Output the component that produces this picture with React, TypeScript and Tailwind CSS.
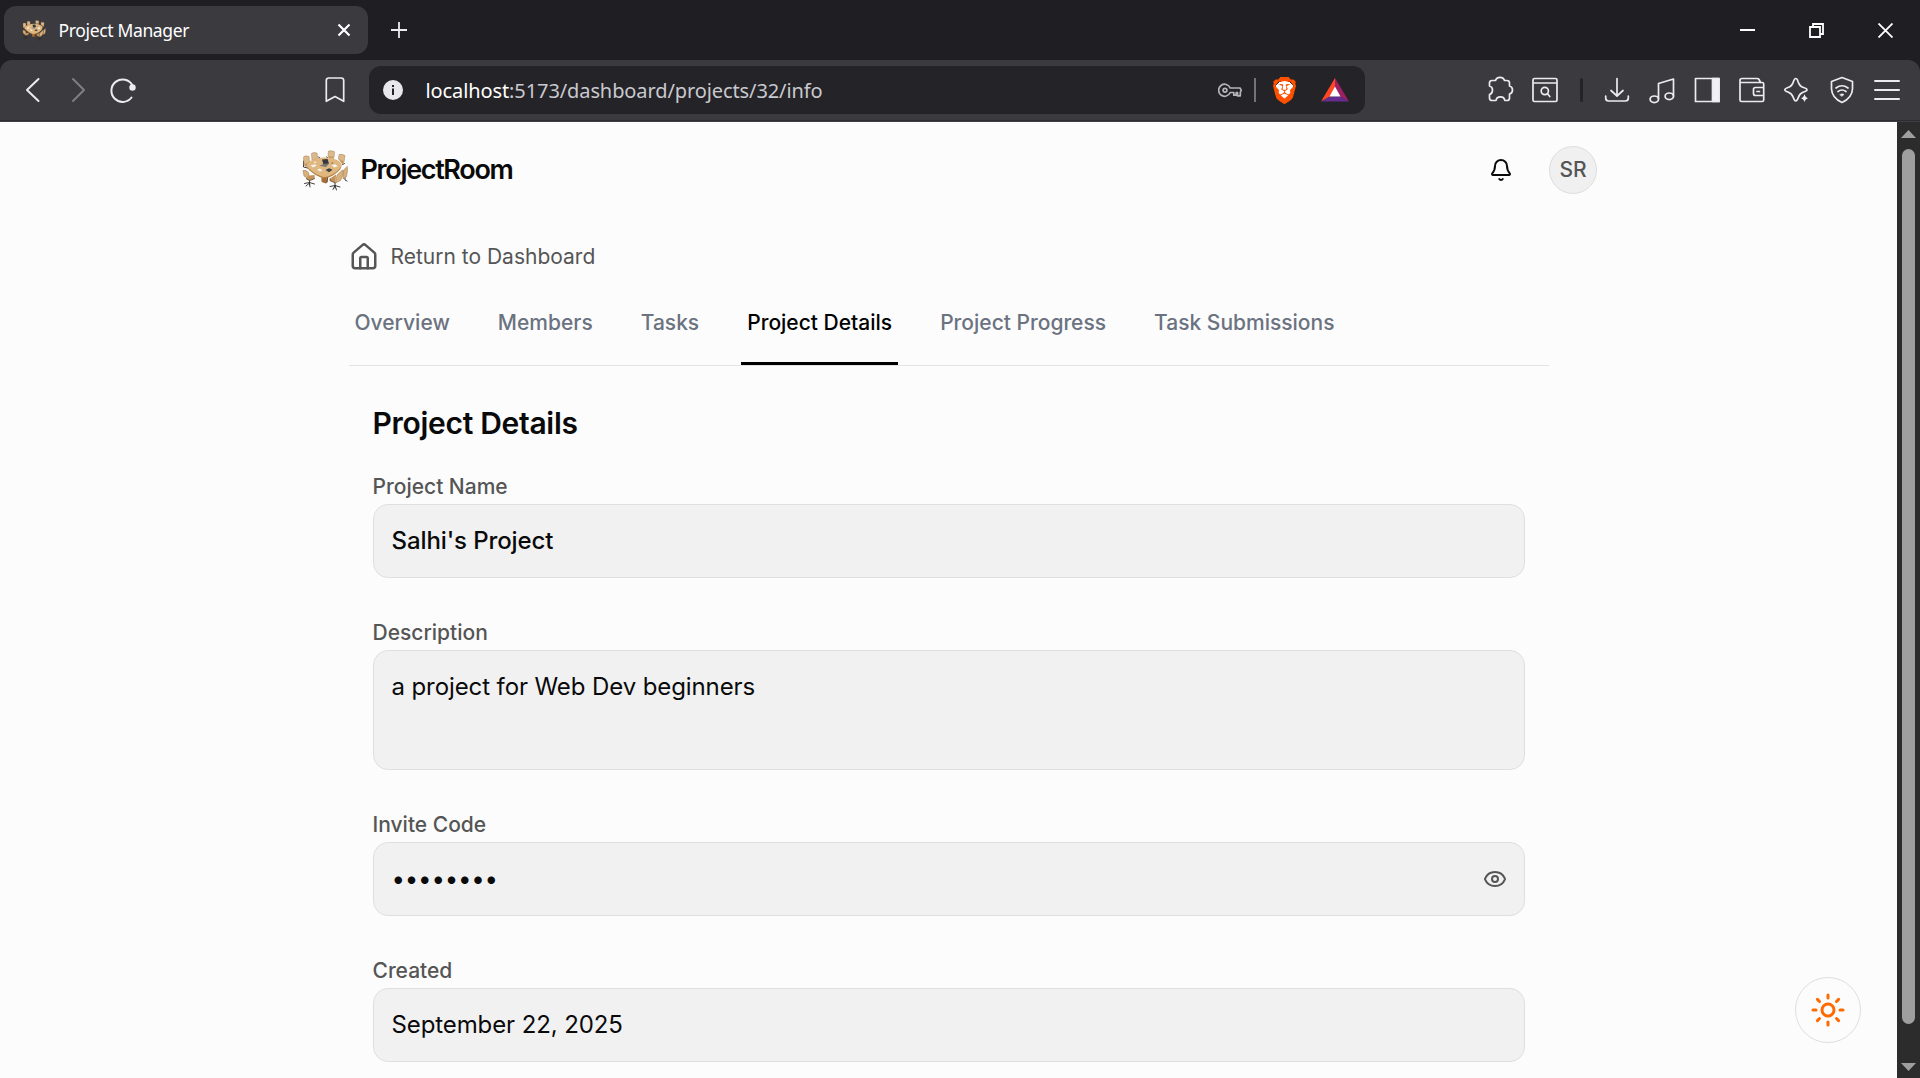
import type { ReactNode } from 'react';
import { Bell, Eye, House, Sun } from 'lucide-react';
import { SiBrave } from 'react-icons/si';

/* Round meeting table with chairs */
function TableLogo({ className }: { className: string }) {
  return (
    <svg viewBox="0 0 46 41" className={className} fill="none" strokeLinejoin="round">
      <g stroke="#2f2a27" strokeWidth=".9" strokeLinecap="round">
        <path d="M7.500 30v5M2.500 33.500l5-1 5 1.500M4 36l3.500-3 .5 4M33 33v5M28 36.500l5-1 5 1.500M31 39.500l2-4 1.500 4.500M43 27.500v2.500l2 1M1.500 11v6l4 1M16.500 7l1.500 1M24.500 7l1.500 1M42.500 13.500l-2 1" />
      </g>
      <g fill="#dcb88a" stroke="#a37e50" strokeWidth=".5">
        <path d="M1.500 7Q3 5 7 6.500L7.500 12 2 15zM9.500 3.500Q11.500 1.800 15 3l.7 5.500L10 10.500zM26.500 1Q29.500.2 32.500 1.800L32 7.500 26 6.500zM37 4.500Q40 3.800 43 5.500L42 12 36.500 9z" />
      </g>
      <g fill="#c39459">
        <path d="M2 15l5.500-3 1 2L4 17zM10 10.500l5.700-2 .5 1-3 1.500zM26 6.500l6 1-.3 1.500-4.700-1zM36.500 9l5.500 3-1.500 2.500z" />
      </g>
      <path d="M19.500 27h5l-.5 6.500-4.500-1.500z" fill="#a66d35" />
      <path d="M24.500 27l1.700-.5-.5 5.500-1.700 1.500z" fill="#7a4d22" />
      <path d="M5 15Q7 11.500 14 9.500Q22 7 30 9Q38.500 11 39.500 15.500Q39.500 19.500 33 24Q26 29 20.500 28.300Q13.500 26 7.500 20.500Q4.300 17.500 5 15z" fill="#b08045" />
      <path d="M5 14Q7 10.700 14 8.700Q22 6.500 30 8.200Q38.500 10.300 39.500 14.500Q39.500 18.300 33 22.700Q26 27.500 20.500 26.800Q13.500 24.500 7.500 19.200Q4.300 16.300 5 14z" fill="#e0b87f" />
      <path d="M20 9.500l5.500-.5 1.500 4.700-5.700.3z" fill="#34383f" />
      <path d="M17.500 15.800l4-1.800 5.500-.2-3 3.200z" fill="#73777b" />
      <path d="M8.500 15.500l4-1.300 2.500 1.300-4 2zM15 19.700l2.700-1.300 2.800 1.800-2.500 1.300zM29.500 15l3.700-.7 2.500 1.900-3.500 1.300zM11.500 12.300l2-.8 1.200.8-2 .8z" fill="#f5f3ee" />
      <path d="M23.500 20l3.500-1.700 3.500 1.500-3.500 2.400zM29 13l1.500-.5 1 .6-1.500.5z" fill="#3c4046" />
      <g fill="#d8b07c" stroke="#9c7444" strokeWidth=".5">
        <path d="M1 20.500Q4 19.500 6.500 22.500L7.500 28Q3.500 28 2 26zM45.300 16.500Q46 20 44.500 26.500L41 29 41.500 20zM40.500 20Q42 24 38.500 30.500L33.500 33 35 25z" />
      </g>
      <path d="M7 25.500l5.500-.5.3 3.500-5.300 2.200-3.500-2.200zM28 28.500l6-4-.5 8.500-5.300-2.200z" fill="#c2925a" />
      <path d="M28 28.500l.2 2.300 5.300 2.200M4 28.500l3.500 2.200 5.300-2.200" stroke="#4b3522" strokeWidth=".7" />
    </svg>
  );
}

/* A 30px toolbar glyph centred in its slot */
function Glyph({ children, slot = 'w-[45px]' }: { children: ReactNode; slot?: string }) {
  return (
    <button className={`flex h-12 shrink-0 items-center justify-center ${slot}`}>
      <svg viewBox="0 0 30 30" className="size-[30px]" fill="none" stroke="#ececf0" strokeWidth="1.7" strokeLinecap="round" strokeLinejoin="round">
        {children}
      </svg>
    </button>
  );
}

function TabStrip() {
  return (
    <div className="flex h-[60px] items-center bg-[#1f1e23] pl-1 font-['Noto_Sans',sans-serif] text-white">
      <div className="flex h-12 w-[364px] items-center rounded-xl bg-[#3b3a3f] pr-3.5 pl-[18px]">
        <TableLogo className="h-[21px] w-6" />
        <span className="ml-[12.500px] text-[17.500px] tracking-[-0.35px]">Project Manager</span>
        <svg viewBox="0 0 20 20" className="ml-auto size-5" fill="none" stroke="#fff" strokeWidth="2.2">
          <path d="M4.500 4.500l11 11M15.500 4.500l-11 11" />
        </svg>
      </div>
      <svg viewBox="0 0 20 20" className="ml-[21px] size-5" fill="none" stroke="#ececf0" strokeWidth="1.8">
        <path d="M10 2v16M2 10h16" />
      </svg>
      <div className="ml-auto flex">
        <div className="flex w-[69px] justify-center">
          <svg viewBox="0 0 15 15" className="size-[15px]" fill="none" stroke="#fff" strokeWidth="2"><path d="M0 7h15" /></svg>
        </div>
        <div className="flex w-[69px] justify-center">
          <svg viewBox="0 0 15 15" className="size-[15px]" fill="none" stroke="#fff" strokeWidth="1.8"><path d="M1 4h10v10H1zM4 4V1h10v10h-3" /></svg>
        </div>
        <div className="flex w-[69px] justify-center">
          <svg viewBox="0 0 15 15" className="size-[15px]" fill="none" stroke="#fff" strokeWidth="1.8"><path d="M.5.5l14 14M14.500.5l-14 14" /></svg>
        </div>
      </div>
    </div>
  );
}

function Toolbar() {
  return (
    <div className="bg-[#1f1e23]">
      <div className="flex h-[62px] items-start rounded-t-xl bg-[#3b3a3f] pt-1.5 pr-[10.500px] pl-[10.500px] shadow-[inset_0_-1px_0_#3f3e43,inset_0_-2px_0_#2e2d32]">
        <Glyph><path d="M20.500 4L9 15l11.500 11" strokeWidth="2" /></Glyph>
        <Glyph><path d="M10 4l11 11-11 11" strokeWidth="2" stroke="#7f7e83" /></Glyph>
        <Glyph>
          <path d="M23.500 22.500A11.200 11.200 0 1 1 24.500 10.500" strokeWidth="2" />
          <circle cx="24.500" cy="12.500" r="3.200" fill="#ececf0" stroke="none" />
        </Glyph>
        <Glyph slot="ml-[167px] w-[45px]">
          <path d="M6.300 5.500q0-2.500 2.500-2.500h12.400q2.500 0 2.500 2.500v20.800L15 21.500l-8.700 4.800z" />
        </Glyph>
        <div className="ml-[11.500px] flex h-12 w-[996px] items-center rounded-xl bg-[#242328] pl-3.5">
          <svg viewBox="0 0 20 20" className="size-5">
            <circle cx="10" cy="10" r="10" fill="#e8e8ec" />
            <path d="M9 8.500h2v6.500H9zM9 5h2v2H9z" fill="#242328" />
          </svg>
          <span className="ml-[22.500px] pt-0.5 font-['Noto_Sans',sans-serif] text-[20px] tracking-[-0.1px] text-[#c9c9cf]">
            <span className="text-white">localhost</span>:5173/dashboard/projects/32/info
          </span>
          <svg viewBox="0 0 24 24" className="ml-auto size-6" fill="none" stroke="#b4b4ba" strokeWidth="1.700">
            <path d="M12.200 10A6 6 0 1 0 12.200 14.500H15.800V17.200H18.200V14.500H19.500V17.800H22.300V14.500L23.200 12.200 22 10z" strokeLinejoin="round" />
            <circle cx="7" cy="12.200" r="1.900" />
          </svg>
          <div className="ml-3 h-6 w-0.5 bg-[#737278]" />
          <div className="ml-[14px] flex size-7 items-center justify-center">
            <div className="flex h-[27px] items-center justify-center bg-[radial-gradient(ellipse_at_center,#fff_50%,transparent_51%)]">
              <SiBrave className="size-[27px] text-[#ff5000]" />
            </div>
          </div>
          <svg viewBox="0 0 28 24" className="mr-[16px] ml-[23px] h-6 w-7">
            <path d="M14 0L0 23.500 9 18.500 14 9z" fill="#ff4724" />
            <path d="M14 0l14 23.500-9-5L14 9z" fill="#9e1f63" />
            <path d="M0 23.500h28l-9-5H9z" fill="#662d91" />
            <path d="M14 8.500l-5.500 10h11z" fill="#fff" />
          </svg>
        </div>
        <div className="ml-auto flex items-center">
          <Glyph>
            <path d="M4.500 8Q4.500 5.500 7 5.500h3.500C11 3.500 13 2.300 15 2.300s4 1.200 4.500 3.200H22q2.500 0 2.500 2.500v3c2 .5 3 2 3 4s-1 3.500-3 4v4q0 2.500-2.500 2.500h-2.200c-.3-2.300-2-3.700-4.300-3.700s-4.200 1.400-4.500 3.700H7q-2.500 0-2.500-2.500v-3.500C6.500 19 7.500 17 7.500 15s-1-3.500-3-4z" />
          </Glyph>
          <Glyph>
            <path d="M3 5q0-1.500 1.500-1.500h21q1.500 0 1.500 1.500v20q0 1.500-1.500 1.500h-21Q3 26.500 3 25zM3 8h24" />
            <circle cx="14.800" cy="16" r="3.600" /><path d="M17.500 18.800l2.300 2.700" />
          </Glyph>
          <div className="mr-3 ml-3 h-6 w-[3px] rounded-full bg-[#242328]" />
          <Glyph><path d="M15 3.500v17M9 15.500l6 5.500 6-5.500M3.700 21v2q0 3 3 3h16.600q3 0 3-3v-2" /></Glyph>
          <Glyph>
            <path d="M11.500 23.500V8.500L26.500 4v17" />
            <ellipse cx="7.300" cy="24.300" rx="4.200" ry="3.300" /><ellipse cx="22.300" cy="21.300" rx="4.200" ry="3.300" />
          </Glyph>
          <Glyph>
            <path d="M3.500 3.500h23.500v23H3.500z" /><path d="M20.500 3.500H27v23h-6.500z" fill="#f2f2f6" />
          </Glyph>
          <Glyph>
            <path d="M23.500 7.500L22 4.500Q21.500 3.500 20 3.500H5Q3 3.500 3 5.500V25q0 1.500 1.500 1.500h20.700q1.500 0 1.500-1.500V9q0-1.500-1.500-1.500H4.500M26.500 12.500h-8q-2 0-2 2v4q0 2 2 2h8" />
            <path d="M20 16.500h2.500" />
          </Glyph>
          <Glyph>
            <path d="M13.800 3.500Q15.300 3.500 16 6.500Q17.500 11.500 21.500 12.500Q25 13.500 25 14.800T21.500 17Q17.500 18.500 16.300 22.500Q15.200 26 13.800 26T11.300 22.500Q10 18.500 6 17Q2.800 16 2.800 14.800T6 12.500Q10 11.500 11.500 6.500Q12.400 3.500 13.800 3.500z" />
            <path d="M22.500 18.500q.8 4 4.500 4.700-3.700.8-4.500 4.600-.8-3.800-4.500-4.600 3.700-.7 4.500-4.700z" fill="#ececf0" stroke="#3b3a3f" strokeWidth=".8" />
          </Glyph>
          <Glyph>
            <path d="M15 2.500L25.500 6.500V14Q25 23 15 27.500Q5 23 4.500 14V6.500z" />
            <path d="M9 13q6-4.500 12 0M11 16.500q4-3 8 0" /><path d="M13 19.500q2-1.300 4 0l-2 1.700z" fill="#ececf0" strokeWidth=".6" />
          </Glyph>
          <Glyph><path d="M3 6h24M3 15h24M3 24h24" strokeWidth="2" /></Glyph>
        </div>
      </div>
    </div>
  );
}

function Header() {
  return (
    <header className="mx-auto flex h-24 w-[1297px] shrink-0 items-center pl-[1.500px]">
      <TableLogo className="h-[41px] w-[46px]" />
      <span className="ml-[13px] text-[27px] font-semibold tracking-[-1.35px] text-[#0a0a0a]">ProjectRoom</span>
      <Bell className="ml-auto size-6 text-[#0a0a0a]" strokeWidth={2} />
      <div className="ml-9 flex size-12 items-center justify-center rounded-full border border-[#dedede] bg-[#f0f0f0] text-[21px] font-medium text-[#555]">
        SR
      </div>
    </header>
  );
}

const tabs = ['Overview', 'Members', 'Tasks', 'Project Details', 'Project Progress', 'Task Submissions'];

function Tabs() {
  return (
    <nav className="mt-9 flex gap-9 border-b border-[#e4e4e4] text-[21px] leading-[30px] font-medium">
      {tabs.map((tab) => (
        <a
          key={tab}
          className={
            tab === 'Project Details'
              ? 'border-b-[3px] border-black px-1.5 pb-6 text-black'
              : 'border-b-[3px] border-transparent px-1.5 pb-6 text-[#6b7280]'
          }
        >
          {tab}
        </a>
      ))}
    </nav>
  );
}

function Field({ label, box = 'items-center h-[74px]', children }: { label: string; box?: string; children: ReactNode }) {
  return (
    <div>
      <div className="pt-0.5 text-[21px] leading-[34px] font-medium text-[#555]">{label}</div>
      <div className={`flex rounded-[15px] border border-[#dfdfdf] bg-[#f1f1f1] pr-[17px] pl-[18px] text-2xl leading-9 tracking-[-0.1px] text-[#0a0a0a] ${box}`}>
        {children}
      </div>
    </div>
  );
}

function ScrollBar() {
  return (
    <div className="flex w-[23px] shrink-0 flex-col items-center bg-[#2c2c2c] pt-2 pb-[7px]">
      <svg viewBox="0 0 15 8" className="h-2 w-[15px]"><path d="M7.500 0L15 8H0z" fill="#9f9f9f" /></svg>
      <div className="mt-[11px] h-[875px] w-[13px] rounded-full bg-[#9f9f9f]" />
      <svg viewBox="0 0 15 8" className="mt-auto h-2 w-[15px]"><path d="M0 0h15L7.500 8z" fill="#9f9f9f" /></svg>
    </div>
  );
}

export default function App() {
  return (
    <div className="flex h-[1078px] w-[1920px] flex-col overflow-hidden">
      <TabStrip />
      <Toolbar />
      <div className="flex min-h-0 flex-1 font-['Inter',sans-serif]">
        <main className="relative flex flex-1 flex-col overflow-hidden bg-[#fcfcfc]">
          <Header />
          <div className="mx-auto w-[1200px] pt-6">
            <a className="flex items-center gap-3 text-[21px] leading-[30px] text-[#555]">
              <House className="size-[30px]" strokeWidth={2} />
              <span>Return to Dashboard</span>
            </a>
            <Tabs />
            <section className="px-6 pt-9">
              <h2 className="mb-6 text-3xl leading-[42px] font-semibold tracking-[-0.3px] text-[#0a0a0a]">Project Details</h2>
              <div className="flex flex-col gap-9">
                <Field label="Project Name"><span className="font-medium">Salhi's Project</span></Field>
                <Field label="Description" box="items-start h-[120px] pt-[18px]">a project for Web Dev beginners</Field>
                <Field label="Invite Code">
                  <span className="tracking-[-0.2px]">••••••••</span>
                  <Eye className="ml-auto size-6 text-[#555]" strokeWidth={2} />
                </Field>
                <Field label="Created">September 22, 2025</Field>
              </div>
            </section>
          </div>
          <button className="absolute right-9 bottom-[35px] flex size-[66px] items-center justify-center rounded-full border border-[#dfdfdf] bg-[#fcfcfc]">
            <Sun className="size-9 text-[#ff6900]" strokeWidth={2} />
          </button>
        </main>
        <ScrollBar />
      </div>
    </div>
  );
}
